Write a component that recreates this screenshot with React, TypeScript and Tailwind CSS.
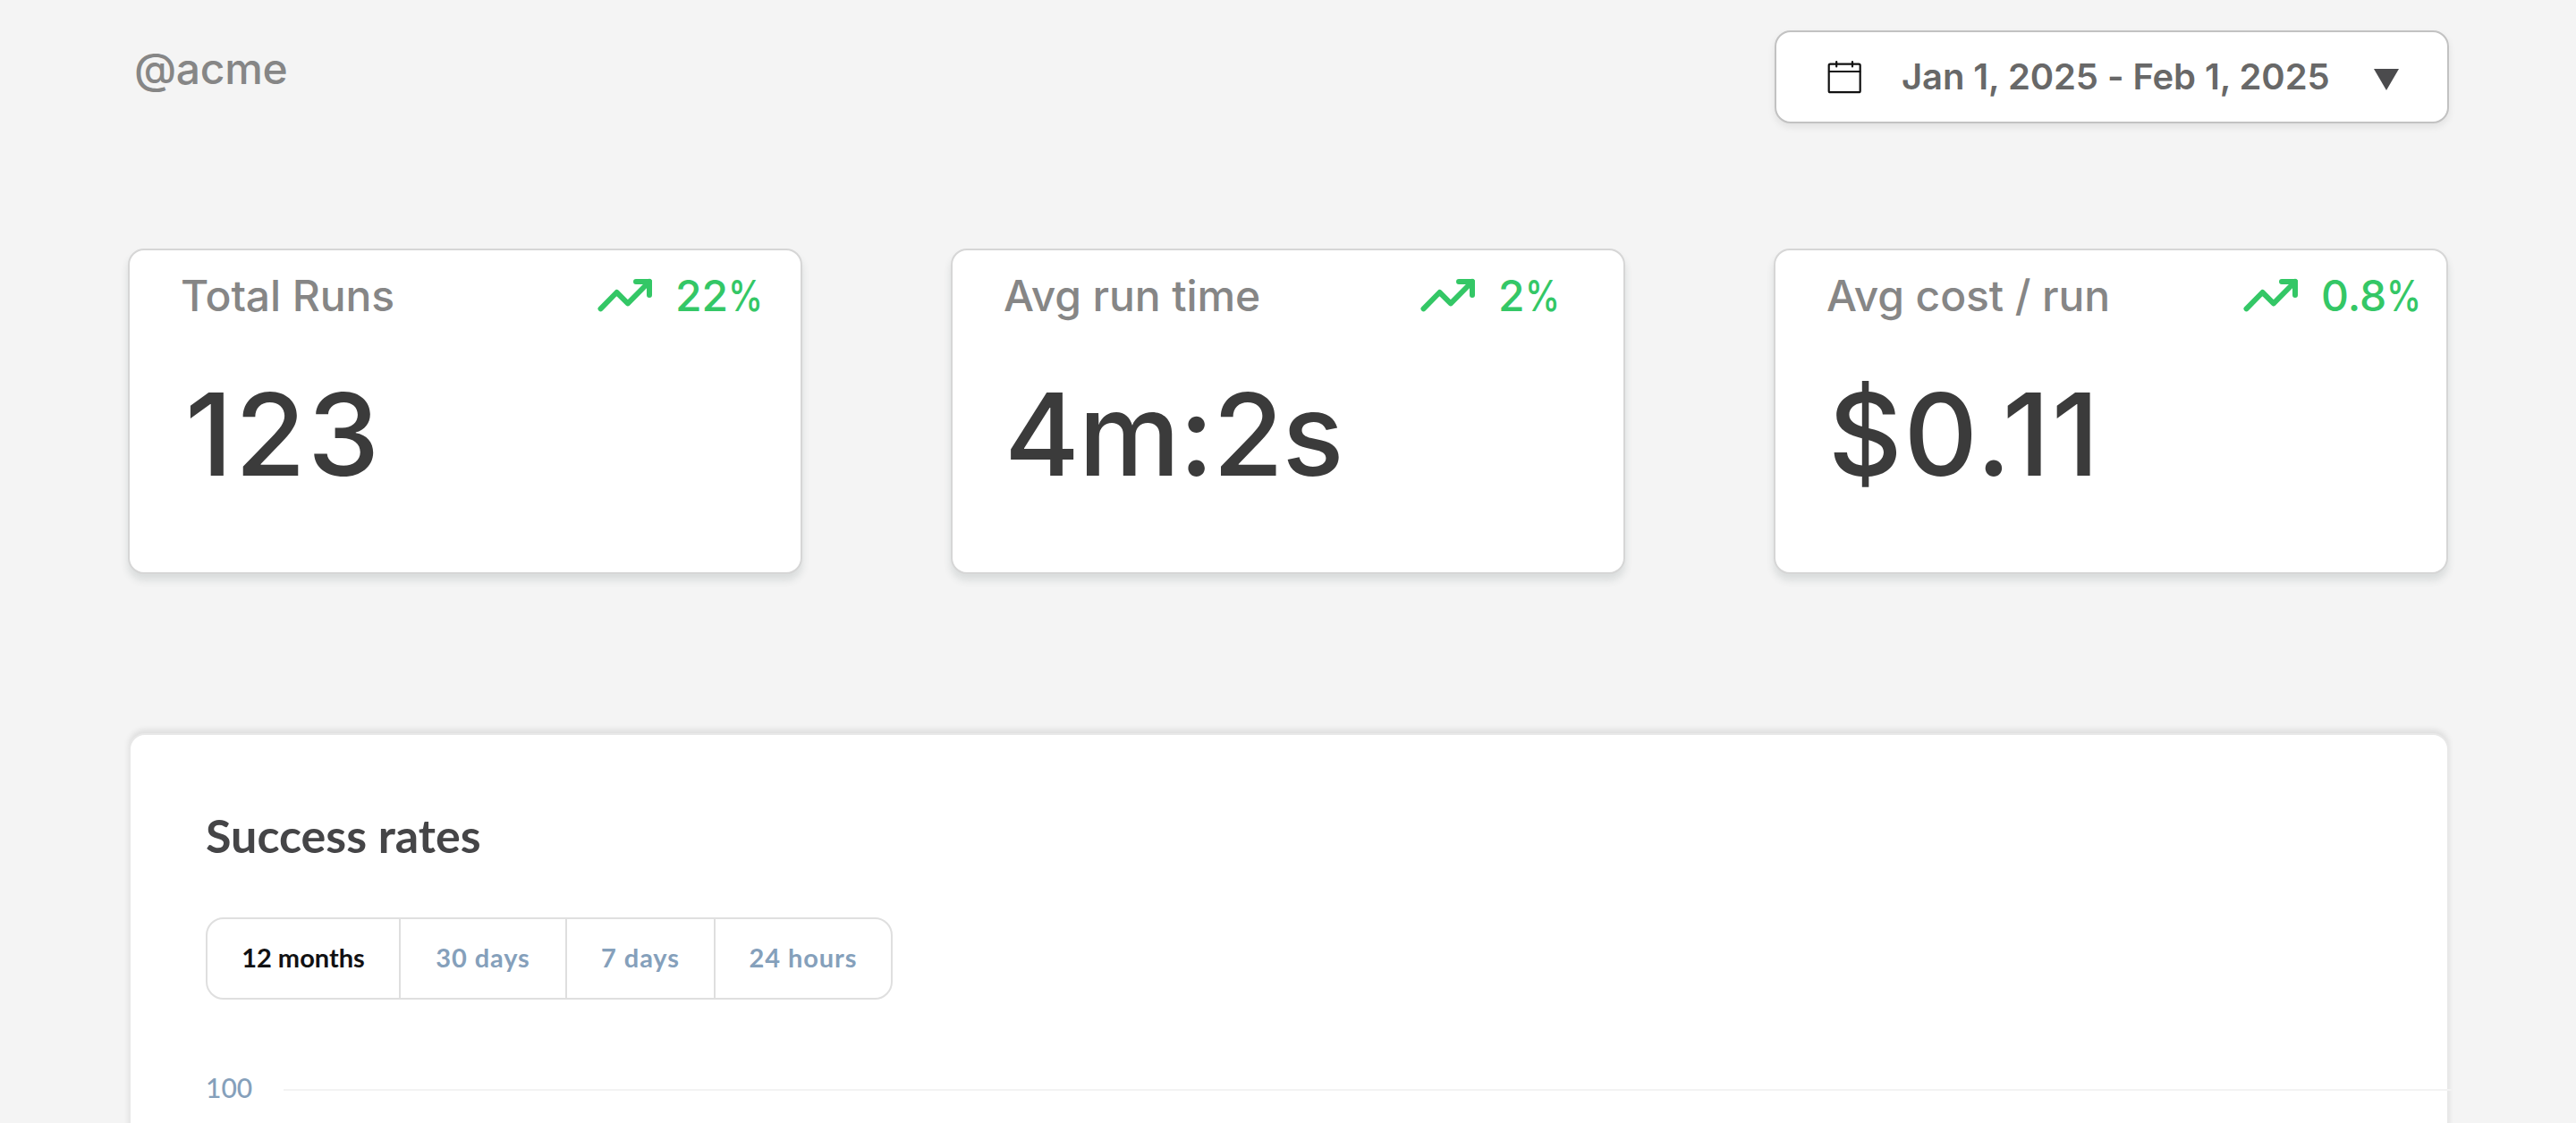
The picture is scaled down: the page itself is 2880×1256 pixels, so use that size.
type Stat = {
  label: string
  value: string
  valueClass: string
  change: string
}

const STATS: Stat[] = [
  { label: 'Total Runs', value: '123', valueClass: 'pl-[4px] tracking-[2.5px]', change: '22' },
  { label: 'Avg run time', value: '4m:2s', valueClass: 'tracking-[-1.2px]', change: '2' },
  { label: 'Avg cost / run', value: '$0.11', valueClass: 'pl-[1px] tracking-[1.8px]', change: '0.8' },
]

const RANGES = [
  { label: '12 months', width: 'w-[216px]', active: true },
  { label: '30 days', width: 'w-[186px]', active: false },
  { label: '7 days', width: 'w-[166px]', active: false },
  { label: '24 hours', width: 'w-[196px]', active: false },
]

export default function App() {
  return (
    <div className="h-[1256px] w-[2880px] overflow-hidden bg-[#f4f4f4] pl-[143px] font-['Inter',sans-serif]">
      <header className="flex w-[2595px] justify-between pt-[34px]">
        <h1 className="mt-[14px] ml-[7px] text-[48px] leading-[58px] font-medium tracking-[-0.3px] text-[#868686]">
          @acme
        </h1>
        <DateRangeButton />
      </header>

      <section className="mt-[140px] flex gap-[166px]">
        {STATS.map((stat) => (
          <StatCard key={stat.label} stat={stat} />
        ))}
      </section>

      <SuccessRates />
    </div>
  )
}

function DateRangeButton() {
  return (
    <button className="flex h-[104px] w-[754px] items-center rounded-[18px] border-2 border-[#c2c2c2] bg-white pl-[57px] shadow-[0_4px_8px_rgba(0,0,0,0.08)]">
      <CalendarIcon />
      <span className="ml-[45px] w-[485px] text-left text-[40px] leading-[48px] font-semibold tracking-[-0.1px] whitespace-nowrap text-[#686868]">
        Jan 1, 2025 - Feb 1, 2025
      </span>
      <svg className="mt-[6px] ml-[43px] h-[24px] w-[28px]" viewBox="0 0 28 24" fill="#4b4b4d">
        <path d="M0 0H28L14 24Z" />
      </svg>
    </button>
  )
}

function StatCard({ stat }: { stat: Stat }) {
  return (
    <div className="h-[364px] w-[754px] rounded-[18px] border-2 border-[#d6d6d6] bg-white pl-[58px] shadow-[0_7px_8px_rgba(60,80,75,0.14)]">
      <div className="flex pt-[22px] text-[48px] leading-[58px] font-medium whitespace-nowrap">
        <span className="-ml-px w-[463px] tracking-[-0.1px] text-[#868686]">{stat.label}</span>
        <TrendIcon />
        <span className="ml-[26px] text-[#34c766]">
          {stat.change}
          <span className="inline-block origin-left scale-x-[0.82]">%</span>
        </span>
      </div>
      <p
        className={`mt-[48px] text-[128px] leading-[155px] font-medium whitespace-nowrap text-[#3b3b3b] ${stat.valueClass}`}
      >
        {stat.value}
      </p>
    </div>
  )
}

function SuccessRates() {
  return (
    <section className="mt-[178px] ml-[1px] h-[600px] w-[2594px] rounded-[18px] border-2 border-[#e8e8e8] bg-white pt-[81px] pl-[84px] shadow-[0_-4px_6px_rgba(0,0,0,0.09)]">
      <h2 className="font-['Lato',sans-serif] text-[52px] leading-[62px] font-bold text-[#454547]">
        Success rates
      </h2>

      <div className="mt-[61px] flex h-[92px] w-[768px] divide-x-2 divide-[#dfdfdf] rounded-[20px] border-2 border-[#dfdfdf] font-['Lato',sans-serif] text-[29px] font-bold">
        {RANGES.map(({ label, width, active }) => (
          <button
            key={label}
            className={`${width} pb-[2px] whitespace-nowrap ${
              active ? 'text-[#111113]' : 'tracking-[0.9px] text-[#85a0bb]'
            }`}
          >
            {label}
          </button>
        ))}
      </div>

      <div className="mt-[80px] flex items-start">
        <span className="w-[87px] shrink-0 font-['Lato',sans-serif] text-[30px] leading-[36px] font-medium text-[#85a0bb]">
          100
        </span>
        <div className="mt-[20px] h-[2px] w-[2424px] shrink-0 bg-[#f3f3f3]" />
      </div>
    </section>
  )
}

function CalendarIcon() {
  return (
    <svg
      className="h-[38px] w-[38px]"
      viewBox="0 0 38 38"
      fill="none"
      stroke="#111"
      strokeWidth="2.200"
      strokeLinecap="round"
    >
      <rect x="1.700" y="4.700" width="35" height="31.500" rx="1.500" />
      <path d="M2 13H36.500M10.200 2V7.500M28 2V7.500" />
    </svg>
  )
}

function TrendIcon() {
  return (
    <svg
      className="mt-[8px] h-[40px] w-[64px] shrink-0"
      viewBox="0 0 64 40"
      fill="none"
      stroke="#34c766"
      strokeWidth="6"
      strokeLinecap="round"
      strokeLinejoin="round"
    >
      <path d="M6.500 35.300L24.500 17L36.900 29.300L61 5" />
      <path d="M46 5H61V20" />
    </svg>
  )
}
